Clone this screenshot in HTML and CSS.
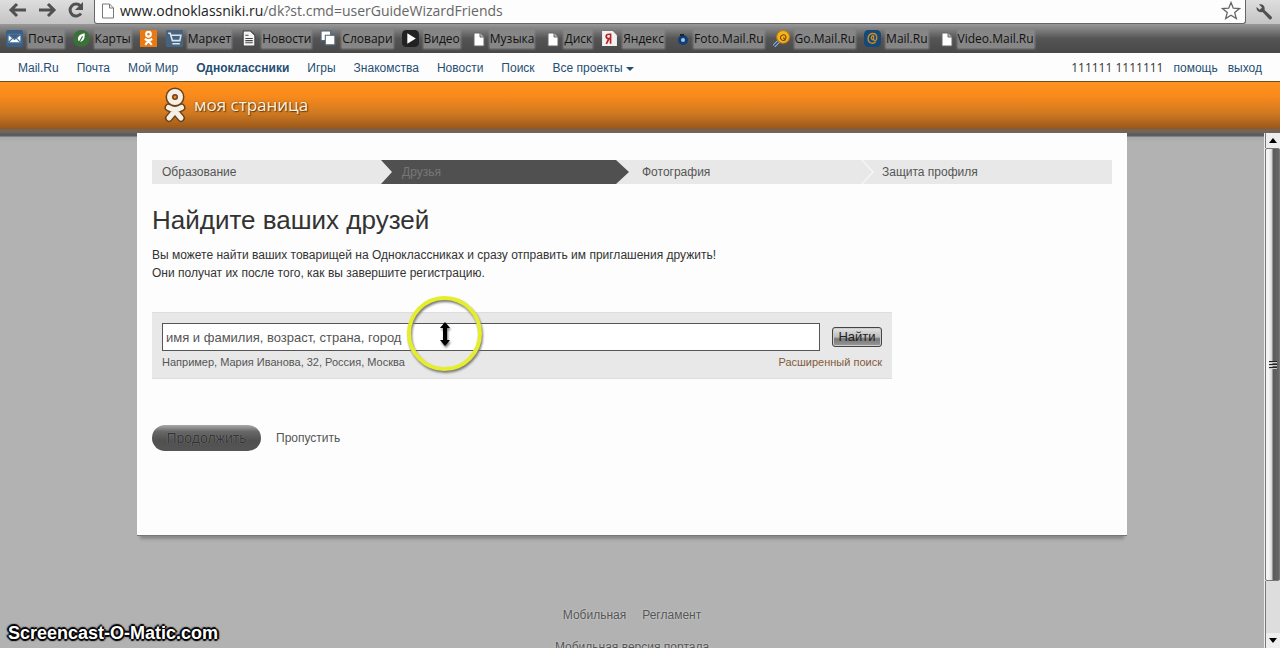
FILE: index.html
```html
<!DOCTYPE html>
<html lang="ru">
<head>
<meta charset="utf-8">
<title>Найдите ваших друзей</title>
<link rel="stylesheet" href="styles.css">
</head>
<body>
<div class="toolbar">
  <div class="tool-buttons">
    <button class="tool" aria-label="Назад"><svg width="20" height="20" viewBox="0 0 20 20"><path d="M9 4 3 10l6 6M3 10h15"/></svg></button>
    <button class="tool" aria-label="Вперёд"><svg width="20" height="20" viewBox="0 0 20 20"><path d="m11 4 6 6-6 6M17 10H2"/></svg></button>
    <button class="tool" aria-label="Обновить"><svg width="20" height="20" viewBox="0 0 20 20"><path d="M15 13.500A6 6 0 1 1 14.500 6"/><path class="solid" d="M17 2v8h-8z"/></svg></button>
  </div>
  <div class="address">
    <svg width="14" height="16" viewBox="0 0 14 16"><path d="M1.500 1h7l4 4v10h-11zM8.500 1v4h4" fill="#fff" stroke="#777"/></svg>
    <div class="url"><span class="host">www.odnoklassniki.ru</span>/dk?st.cmd=userGuideWizardFriends</div>
    <button class="star" aria-label="В закладки"><svg width="20" height="20" viewBox="0 0 20 20"><path d="m10 1.500 2.300 5.700 6.200.4-4.800 4 1.600 6-5.300-3.400-5.300 3.400 1.600-6-4.800-4 6.200-.4z" fill="#fff" stroke="#666" stroke-width="1.300"/></svg></button>
  </div>
  <button class="tool wrench" aria-label="Настройки"><svg width="18" height="18" viewBox="0 0 18 18"><path class="solid" d="M4 1.500 7 4.500 4.800 6.800 1.500 4C1 8 4 10 7.500 9l6.500 7c1.500 1.500 4-.5 2.500-2.500L9.500 7C10.500 3 7.500.5 4 1.500z"/></svg></button>
</div>

<nav class="bookmarks" aria-label="Закладки">
  <a href="#"><svg viewBox="0 0 16 16"><rect width="16" height="16" rx="2" fill="#3c5f86"/><path d="M2 4h12v8H2zM2 4l6 5 6-5M2 12l4-4m8 4-4-4" fill="#fff" stroke="#54779c"/></svg><span>Почта</span></a>
  <a href="#"><svg viewBox="0 0 16 16"><circle cx="8" cy="8" r="8" fill="#3a7138"/><path d="M11 3C5 4 4 7 5 10l2 1c4-1 4-4 4-8z" fill="#fff"/><path d="m5 13 4-7" stroke="#3a7138"/></svg><span>Карты</span></a>
  <a href="#" aria-label="Одноклассники"><svg viewBox="0 0 16 16"><rect width="16" height="16" fill="#e87914"/><g fill="none" stroke="#fff" stroke-width="2"><circle cx="8" cy="4" r="2.200"/><path d="M4.500 8.500q3.500 2 7 0M8 10l-3 4m3-4 3 4"/></g></svg></a>
  <a href="#"><svg viewBox="0 0 16 16"><rect width="16" height="16" rx="1" fill="#46637f"/><path d="M2 3h2l2 7h7l1-5H5m1 8h7" fill="none" stroke="#dce5ee" stroke-width="1.500"/></svg><span>Маркет</span></a>
  <a href="#"><svg viewBox="0 0 16 16"><path d="M3 1h7l4 4v10H3z" fill="#f4f4f4" stroke="#444"/><path d="M5 5h3M5 8h7M5 10h7M5 12h7" stroke="#444"/></svg><span>Новости</span></a>
  <a href="#"><svg viewBox="0 0 16 16"><path d="M1 1h9v9H1z" fill="#fff" stroke="#53677b"/><path d="M5 5h9v9H5z" fill="#fff" stroke="#53677b"/></svg><span>Словари</span></a>
  <a href="#"><svg viewBox="0 0 16 16"><rect width="16" height="16" rx="4" fill="#222"/><path d="m5 3 8 5-8 5z" fill="#fff"/></svg><span>Видео</span></a>
  <a href="#" class="page"><svg viewBox="0 0 12 16"><path d="M1 2h6l4 4v9H1z" fill="#fff" stroke="#666"/><path d="M7 2v4h4" fill="#bbb" stroke="#666"/></svg><span>Музыка</span></a>
  <a href="#" class="page"><svg viewBox="0 0 12 16"><path d="M1 2h6l4 4v9H1z" fill="#fff" stroke="#666"/><path d="M7 2v4h4" fill="#bbb" stroke="#666"/></svg><span>Диск</span></a>
  <a href="#"><svg viewBox="0 0 16 16"><path d="M1 1h10l4 4v10H1z" fill="#f2f2f2"/><path d="M9 13V4H7.500C4 4 4 8 7.500 8H9M7.500 8 5 13" fill="none" stroke="#b22" stroke-width="1.600"/></svg><span>Яндекс</span></a>
  <a href="#" class="page"><svg viewBox="0 0 12 16"><circle cx="6" cy="9" r="5" fill="#143d78"/><circle cx="6" cy="9" r="2" fill="#9cc5e8"/><path d="M3 4h4" stroke="#222" stroke-width="2"/></svg><span>Foto.Mail.Ru</span></a>
  <a href="#"><svg viewBox="0 0 16 16"><path d="m1 15 5-5" stroke="#b9cbe0" stroke-width="3"/><path d="m1 15 5-5" stroke="#2d5488" stroke-width="1.500"/><circle cx="9.500" cy="6.500" r="6" fill="#f2b51b" stroke="#c07c10"/><path d="M12 9c-3 2-5 0-5-2s4-4 5-1-2 3-2 1" fill="none" stroke="#7b3d0c"/></svg><span>Go.Mail.Ru</span></a>
  <a href="#"><svg viewBox="0 0 16 16"><rect width="16" height="16" rx="4" fill="#164878"/><path d="M11 11c-3 3-8 1-7-4s8-5 8 0-4 3-3 0-3-1-2 1 2 1 2 0" fill="none" stroke="#c88d27" stroke-width="1.300"/></svg><span>Mail.Ru</span></a>
  <a href="#" class="page"><svg viewBox="0 0 12 16"><path d="M1 2h6l4 4v9H1z" fill="#fff" stroke="#666"/><path d="M7 2v4h4" fill="#bbb" stroke="#666"/></svg><span>Video.Mail.Ru</span></a>
</nav>

<div class="portal">
  <nav class="portal-links">
    <a href="#">Mail.Ru</a><a href="#">Почта</a><a href="#">Мой Мир</a><a href="#" class="current">Одноклассники</a><a href="#">Игры</a><a href="#">Знакомства</a><a href="#">Новости</a><a href="#">Поиск</a><a href="#" class="more">Все проекты</a>
  </nav>
  <div class="account"><span class="user">111111 1111111</span><a href="#">помощь</a><a href="#">выход</a></div>
</div>

<header class="site-header">
  <a class="brand" href="#">
    <svg width="22" height="36" viewBox="0 0 22 36"><g fill="none" stroke-linecap="round"><g stroke="#6b4218" stroke-width="8"><circle cx="11" cy="10" r="5.500"/><path d="M4.500 20.500q6.500 4 13 0M11 24l-6 7m6-7 6 7"/></g><g stroke="#f6efe6" stroke-width="5"><circle cx="11" cy="10" r="5.500"/><path d="M4.500 20.500q6.500 4 13 0M11 24l-6 7m6-7 6 7"/></g></g></svg>
    <span>моя страница</span>
  </a>
</header>

<div class="viewport">
  <div class="page-area">
    <main class="card">
      <ol class="steps">
        <li>Образование</li>
        <li class="active">Друзья</li>
        <li>Фотография</li>
        <li class="last">Защита профиля</li>
      </ol>
      <h1>Найдите ваших друзей</h1>
      <p class="intro">Вы можете найти ваших товарищей на Одноклассниках и сразу отправить им приглашения дружить!<br>Они получат их после того, как вы завершите регистрацию.</p>
      <form class="search">
        <div class="search-row">
          <input type="text" aria-label="Поиск друзей" placeholder="имя и фамилия, возраст, страна, город">
          <button type="button" class="find">Найти</button>
        </div>
        <div class="search-notes">
          <span>Например, Мария Иванова, 32, Россия, Москва</span>
          <a href="#">Расширенный поиск</a>
        </div>
        <div class="pointer"><svg width="12" height="24" viewBox="0 0 12 24"><path d="m6 0 5 6H8v12h3l-5 6-5-6h3V6H1z"/></svg></div>
      </form>
      <div class="actions">
        <button type="button" class="continue">Продолжить</button>
        <a href="#">Пропустить</a>
      </div>
    </main>
    <footer class="footer">
      <div class="footer-links"><a href="#">Мобильная</a><a href="#">Регламент</a></div>
      <div>Мобильная версия портала</div>
    </footer>
  </div>
  <div class="scrollbar">
    <div class="scroll-end"><svg width="8" height="5" viewBox="0 0 8 5"><path d="m4 0 4 5H0z"/></svg></div>
    <div class="thumb"><i></i><i></i><i></i></div>
    <div class="track"></div>
    <div class="scroll-end"><svg width="8" height="5" viewBox="0 0 8 5"><path d="m4 5 4-5H0z"/></svg></div>
  </div>
</div>
<div class="watermark">Screencast-O-Matic.com</div>
</body>
</html>
```
FILE: styles.css
```css
* { box-sizing: border-box; }

body {
  margin: 0;
  height: 100vh;
  overflow: hidden;
  display: flex;
  flex-direction: column;
  background: #b2b2b2;
  color: #333;
  font: 12px/18px "Liberation Sans", Arial, sans-serif;
}

a { color: inherit; text-decoration: none; }
button { font: inherit; padding: 0; border: 0; background: none; }

/* Browser toolbar */
.toolbar {
  flex: none;
  display: flex;
  height: 24px;
  background: linear-gradient(#dedede, #c4c4c4);
}
.tool-buttons { display: flex; gap: 9px; padding: 0 8px 4px 8px; align-items: center; }
.tool { display: flex; }
.tool svg { fill: none; stroke: #505050; stroke-width: 3; }
.tool .solid { fill: #505050; stroke: none; }
.address {
  flex: 1;
  display: flex;
  align-items: center;
  gap: 5px;
  padding: 0 4px 2px 6px;
  background: #fdfdfd;
  border: 1px solid #666;
  border-top: 0;
  border-radius: 0 0 3px 3px;
}
.url { flex: 1; font: 14px/20px "Open Sans", sans-serif; color: #666; white-space: nowrap; }
.host { color: #222; }
.star { display: flex; }
.wrench { width: 34px; padding-left: 9px; align-items: center; }

/* Bookmarks */
.bookmarks {
  flex: none;
  display: flex;
  align-items: center;
  gap: 9px;
  height: 29px;
  padding-left: 6px;
  background: linear-gradient(#999, #777 25%, #555 50%, #484848);
  color: #111;
  font: 12px/18px "Open Sans", sans-serif;
  white-space: nowrap;
}
.bookmarks a { display: flex; align-items: center; gap: 5px; }
.bookmarks svg { width: 17px; height: 17px; }
.bookmarks .page svg { width: 12px; height: 16px; }
.bookmarks .page { padding-left: 4px; }
.bookmarks span { background: #868686; box-shadow: 0 0 2px 1px #868686; }

/* Portal links */
.portal {
  flex: none;
  display: flex;
  justify-content: space-between;
  height: 28px;
  padding: 6px 18px 0;
  background: #fdfdfd;
  color: #264e73;
}
.portal-links { display: flex; gap: 18px; }
.current { font-weight: bold; }
.more::after {
  content: "";
  display: inline-block;
  margin-left: 3px;
  vertical-align: middle;
  border: 4px solid transparent;
  border-top-color: currentColor;
  border-bottom: 0;
}
.account { display: flex; gap: 10px; }
.user { color: #333; font-family: "Open Sans", sans-serif; }

/* Site header */
.site-header {
  flex: none;
  height: 52px;
  padding-right: 16px;
  background: linear-gradient(#ff921f, #f98a1c 30%, #ce7820 68%, #96571b);
  border-top: 1px solid #665020;
  border-bottom: 4px solid #736457;
}
.brand {
  display: flex;
  align-items: center;
  gap: 8px;
  width: 990px;
  height: 46px;
  margin: 0 auto;
  padding-left: 27px;
  color: #fff2dc;
  font: 17px/24px "Open Sans", sans-serif;
  text-shadow: 1px 1px 1px #633c12, 0 0 2px #8b5519;
}

/* Page */
.viewport { flex: 1; display: flex; min-height: 0; }
.page-area { flex: 1; overflow: hidden; background: linear-gradient(#5a5c60 3px, #a8a8a8 4px, #b2b2b2 9px); }
.card {
  width: 990px;
  margin: 0 auto;
  padding: 27px 15px 84px;
  background: #fdfdfd;
  border-bottom: 1px solid #777;
  box-shadow: 0 6px 3px -3px #888;
}
.steps {
  display: grid;
  grid-template-columns: repeat(4, 1fr);
  margin: 0;
  padding: 0;
  list-style: none;
  background: #e8e8e8;
  color: #555;
  line-height: 24px;
}
.steps li { padding-left: 10px; }
.steps .active {
  margin: 0 3px 0 -11px;
  padding-left: 21px;
  background: #505050;
  color: #777;
  clip-path: polygon(0 0, 235px 0, 100% 50%, 235px 100%, 0 100%, 11px 50%);
}
.steps .last { position: relative; }
.steps .last::before {
  content: "";
  position: absolute;
  left: -11px;
  top: 0;
  width: 13px;
  height: 24px;
  background: #f6f6f6;
  clip-path: polygon(0 0, 2px 0, 100% 50%, 2px 100%, 0 100%, 11px 50%);
}
h1 { margin: 18px 0 8px; font-size: 26px; line-height: 36px; font-weight: 400; color: #333; }
.intro { margin: 0; }

.search {
  position: relative;
  width: 740px;
  margin-top: 30px;
  padding: 10px 10px 7px;
  background: #e8e8e8;
  border: 1px solid #dedede;
  border-width: 1px 0;
}
.search-row { display: flex; align-items: center; gap: 12px; }
.search input {
  flex: 1;
  height: 28px;
  padding: 0 3px;
  border: 1px solid #555;
  background: #fff;
  font: 13px/20px "Liberation Sans", Arial, sans-serif;
}
.search input::placeholder { color: #555; opacity: 1; }
.find {
  width: 50px;
  height: 20px;
  border: 1px solid #444;
  border-radius: 3px;
  background: linear-gradient(#e4e4e4, #bbb 50%, #777 60%, #999);
  box-shadow: inset 0 0 0 1px #ccc;
  color: #222;
  font-size: 13px;
}
.search-notes { display: flex; justify-content: space-between; margin-top: 2px; color: #555; font-size: 11px; }
.search-notes a { color: #85583a; }
.pointer {
  position: absolute;
  left: 255px;
  top: -17px;
  display: flex;
  align-items: center;
  justify-content: center;
  width: 75px;
  height: 75px;
  border: 4px solid #e5ee2c;
  border-radius: 50%;
  filter: drop-shadow(1px 2px 1px #777);
}

.actions { display: flex; align-items: center; gap: 15px; margin-top: 46px; color: #555; }
.continue {
  width: 109px;
  height: 26px;
  border-radius: 13px;
  background: linear-gradient(#aaa, #686868 25%, #505050 60%, #555);
  color: #333;
  font-size: 14px;
  line-height: 24px;
  text-shadow: 0 0 1px #999;
}
.footer { margin-top: 69px; text-align: center; line-height: 20px; color: #555; text-shadow: 0 0 2px #ddd; }
.footer-links { display: flex; justify-content: center; gap: 16px; margin-bottom: 12px; }

/* Scrollbar */
.scrollbar { flex: none; width: 16px; display: flex; flex-direction: column; border-left: 1px solid #eee; background: #ddd; }
.scroll-end { height: 15px; display: flex; align-items: center; justify-content: center; background: #eee; border-left: 1px solid #777; }
.thumb {
  flex: 432;
  display: flex;
  flex-direction: column;
  align-items: center;
  justify-content: center;
  gap: 2px;
  border: 1px solid #777;
  border-radius: 2px;
  background: linear-gradient(90deg, #f4f4f4 3px, #d2d2d2 6px, #5b5b5b 7px, #666);
}
.thumb i { width: 8px; height: 1px; background: #222; box-shadow: 0 1px #ccc; }
.track { flex: 52; border-left: 1px solid #777; }

.watermark {
  position: absolute;
  left: 8px;
  bottom: 4px;
  color: #fff;
  font: bold 18px/22px "Liberation Sans", Arial, sans-serif;
  text-shadow: -2px 0 1px #000, 2px 0 1px #000, 0 -2px 1px #000, 0 2px 1px #000, 1px 1px 2px #000, -1px -1px 2px #000;
}
```
